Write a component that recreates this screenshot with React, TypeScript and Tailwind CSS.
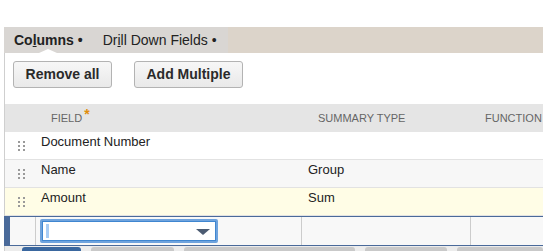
import React from 'react';

function DragHandle() {
  return (
    <svg width="8" height="10" viewBox="0 0 8 10" className="block">
      {[0, 4, 8].map((y) =>
        [0, 5].map((x) => <rect key={`${x}-${y}`} x={x} y={y} width="2" height="2" fill="#9a9a9a" />)
      )}
    </svg>
  );
}

const rows = [
  { field: 'Document Number', summary: '', bg: 'bg-white' },
  { field: 'Name', summary: 'Group', bg: 'bg-[#f7f7f7]' },
  { field: 'Amount', summary: 'Sum', bg: 'bg-[#fffde6]' },
];

export default function App() {
  return (
    <div className="w-[543px] h-[251px] overflow-hidden bg-white font-['Liberation_Sans',Arial,sans-serif] text-[#222]">
      <div className="h-[27px]" />
      <div className="ml-[4px]">
        {/* tabs */}
        <div className="flex h-[26px] bg-[#dcd4ca]">
          <div className="flex bg-[#d9d6d3]">
            <div className="relative flex items-center px-[10px] text-[14px] font-bold">
              <span>
                Co<u>l</u>umns •
              </span>
              <span className="absolute bottom-0 left-1/2 -translate-x-1/2 w-0 h-0 border-l-[9px] border-r-[9px] border-b-[4px] border-l-transparent border-r-transparent border-b-white" />
            </div>
            <div className="flex items-center pl-[10px] pr-[11px] text-[14px]">
              <span>
                Dr<u>i</u>ll Down Fields •
              </span>
            </div>
          </div>
        </div>

        {/* body */}
        <div className="border-l border-[#cfcfcf]">
          <div className="flex gap-[22px] pl-[8px] pt-[8px] pb-[16px]">
            <button className="h-[27px] w-[99px] rounded-[3px] border border-[#b3b3b3] bg-gradient-to-b from-[#f7f7f7] to-[#e9e9e9] text-[14px] font-bold text-[#2a2a2a]">
              Remove all
            </button>
            <button className="h-[27px] w-[109px] rounded-[3px] border border-[#b3b3b3] bg-gradient-to-b from-[#f7f7f7] to-[#e9e9e9] text-[14px] font-bold text-[#2a2a2a]">
              Add Multiple
            </button>
          </div>

          {/* header */}
          <div className="grid grid-cols-[30px_266px_169px_1fr] h-[28px] bg-[#e5e5e5] text-[11px] text-[#666] uppercase">
            <div />
            <div className="flex items-center pl-[16px]">
              FIELD
              <span className="ml-[2px] -mt-[8px] text-[14px] font-bold leading-[14px] text-[#e08e0b]">*</span>
            </div>
            <div className="flex items-center pl-[17px]">Summary Type</div>
            <div className="flex items-center pl-[15px]">Function</div>
          </div>

          {/* rows */}
          {rows.map((r) => (
            <div
              key={r.field}
              className={`grid grid-cols-[30px_266px_169px_1fr] h-[28px] border-b border-[#e2e2e2] text-[13px] leading-[16px] ${r.bg}`}
            >
              <div className="flex items-center pl-[13px]">
                <DragHandle />
              </div>
              <div className="pl-[6px] pt-[2px]">{r.field}</div>
              <div className="pl-[7px] pt-[2px]">{r.summary}</div>
              <div />
            </div>
          ))}

          {/* editing row */}
          <div className="-ml-px grid grid-cols-[31px_266px_169px_1fr] h-[30px] border-y border-[#4a6a9a] bg-[#f8f8f8]">
            <div className="border-l-[6px] border-l-[#4a6a9a]" />
            <div className="border-l border-[#cccccc] pl-[4px] pt-[2px]">
              <div className="relative h-[24px] w-[178px] rounded-[2px] border-2 border-[#6fa3dd] bg-white shadow-[inset_0_0_0_1px_#3f86d0]">
                <span className="absolute left-[4px] top-[3px] h-[14px] w-[3px] bg-[#a9cdf5]" />
                <span className="absolute right-[6px] top-[8px] h-0 w-0 border-l-[7px] border-r-[7px] border-t-[6px] border-l-transparent border-r-transparent border-t-[#4b5b72]" />
              </div>
            </div>
            <div className="border-l border-[#cccccc]" />
            <div className="border-l border-[#cccccc]" />
          </div>

          {/* tops of the buttons below */}
          <div className="flex gap-[10px] pl-[17px] pt-[1px] h-[10px] bg-[#ececec]">
            <div className="w-[62px] h-[10px] rounded-t-[3px] bg-[#3a679f]" />
            <div className="w-[87px] h-[10px] rounded-t-[3px] bg-[#c9c9c9]" />
            <div className="w-[179px] h-[10px] rounded-t-[3px] bg-[#c9c9c9]" />
            <div className="w-[86px] h-[10px] rounded-t-[3px] bg-[#c9c9c9]" />
            <div className="w-[90px] h-[10px] rounded-t-[3px] bg-[#c9c9c9]" />
          </div>
        </div>
      </div>
    </div>
  );
}
